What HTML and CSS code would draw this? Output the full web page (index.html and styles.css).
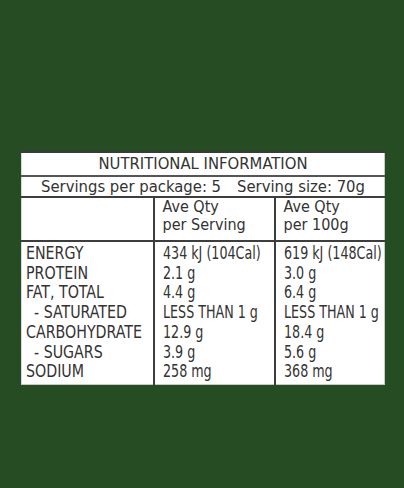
FILE: index.html
```html
<!DOCTYPE html>
<html>
<head>
<meta charset="utf-8">
<link rel="stylesheet" href="styles.css">
</head>
<body>
<div class="page">
  <table class="nip">
    <colgroup><col class="c1"><col class="c2"><col class="c3"></colgroup>
    <tr class="title"><td colspan="3">NUTRITIONAL INFORMATION</td></tr>
    <tr class="serv"><td colspan="3">Servings per package: 5<span class="gap"></span>Serving size: 70g</td></tr>
    <tr class="head"><td></td><td>Ave Qty<br>per Serving</td><td>Ave Qty<br>per 100g</td></tr>
    <tr class="first"><td><span class="n">ENERGY</span></td><td><span class="v">434 kJ (104Cal)</span></td><td><span class="v">619 kJ (148Cal)</span></td></tr>
    <tr><td><span class="n">PROTEIN</span></td><td><span class="v">2.1 g</span></td><td><span class="v">3.0 g</span></td></tr>
    <tr><td><span class="n">FAT, TOTAL</span></td><td><span class="v">4.4 g</span></td><td><span class="v">6.4 g</span></td></tr>
    <tr><td class="ind"><span class="n">- SATURATED</span></td><td><span class="v">LESS THAN 1 g</span></td><td><span class="v">LESS THAN 1 g</span></td></tr>
    <tr><td><span class="n">CARBOHYDRATE</span></td><td><span class="v">12.9 g</span></td><td><span class="v">18.4 g</span></td></tr>
    <tr><td class="ind"><span class="n">- SUGARS</span></td><td><span class="v">3.9 g</span></td><td><span class="v">5.6 g</span></td></tr>
    <tr class="last"><td><span class="n">SODIUM</span></td><td><span class="v">258 mg</span></td><td><span class="v">368 mg</span></td></tr>
  </table>
</div>
</body>
</html>
```
FILE: styles.css
```css
html, body {
  margin: 0;
  padding: 0;
  background: #254c23;
}
.page {
  width: 404px;
  height: 488px;
  padding: 151px 0 0 21px;
  box-sizing: border-box;
}
.nip {
  width: 363px;
  table-layout: fixed;
  border-collapse: collapse;
  background: #fff;
  color: #333;
  font-family: "DejaVu Sans Condensed", "Liberation Sans Narrow", sans-serif;
  font-size: 17px;
  border-top: 2px solid #3a3a3a;
  border-left: 1px solid #d8d8d8;
  border-right: 1px solid #c8c8c8;
  border-bottom: 1px solid #c8c8c8;
}
.c1 { width: 132px; }
.c2 { width: 121px; }
.c3 { width: 110px; }
.nip td {
  padding: 0 0 0 8px;
  line-height: 19.7px;
  vertical-align: top;
  white-space: nowrap;
  overflow: visible;
}
.nip tr td:first-child { padding-left: 4px; }
.nip tr td + td { border-left: 2px solid #3d3d3d; }
.n, .v {
  display: inline-block;
  transform-origin: 0 50%;
}
.n { transform: scaleX(0.93); }
.v { transform: scaleX(0.83); }
.title td {
  text-align: center;
  font-size: 16.5px;
  height: 22px;
  line-height: 22px;
  border-bottom: 2px solid #555;
  padding: 0 !important;
}
.serv td {
  text-align: center;
  font-size: 16.5px;
  height: 19px;
  line-height: 19px;
  border-bottom: 2px solid #3d3d3d;
  padding: 0 !important;
}
.gap { display: inline-block; width: 16px; }
.head td {
  height: 42px;
  font-size: 16px;
  line-height: 18px;
  padding-top: 0;
  border-bottom: 2px solid #3d3d3d;
}
.first td { padding-top: 2px; }
.last td { padding-bottom: 2px; }
.ind { padding-left: 12px !important; }
```
